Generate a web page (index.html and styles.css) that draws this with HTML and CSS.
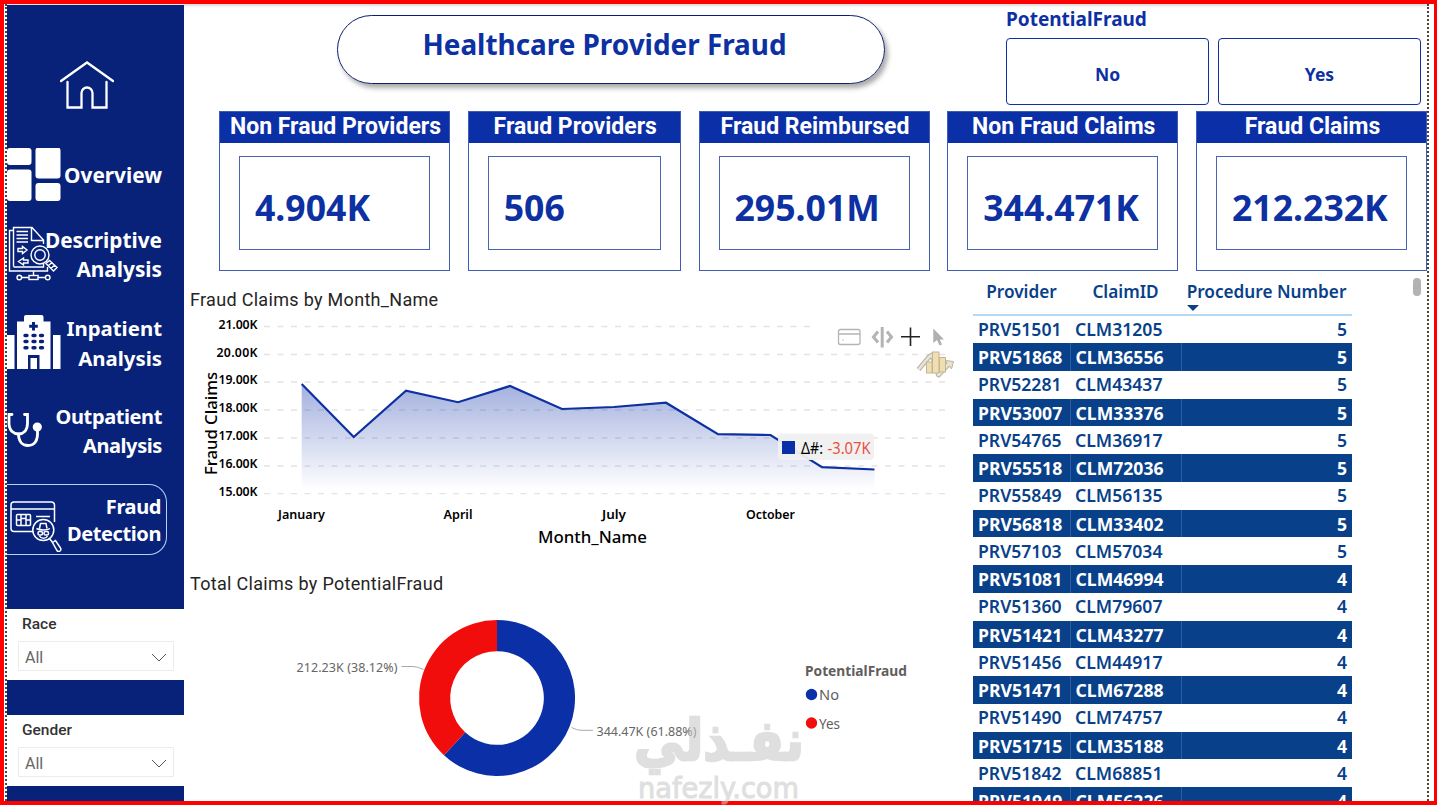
FILE: index.html
```html
<!DOCTYPE html>
<html lang="en">
<head>
    <meta charset="UTF-8">
    <meta name="viewport" content="width=device-width, initial-scale=1.0">
    <title>Healthcare Provider Fraud</title>
    <link rel="stylesheet" href="styles.css">
</head>
<body>
    <div class="report">
        <div class="page">
            <aside class="sidebar">
                <svg class="home" viewBox="0 0 54 48" width="54" height="48">
                    <path d="M1 20 L27 1.500 L53 20 M7.500 21 V46.500 H21.500 V32 a5.500 5.500 0 0 1 11 0 V46.500 H46.500 V21"/>
                </svg>
                <nav>
                    <a class="nav-item overview">
                        <svg viewBox="7 148 54 54" width="54" height="54" fill="#fff">
                            <rect x="7" y="148" width="24.500" height="17" rx="3"/>
                            <rect x="7" y="169.500" width="24.500" height="31.500" rx="3"/>
                            <rect x="35.500" y="147.500" width="25" height="31" rx="3"/>
                            <rect x="35.500" y="183" width="25" height="18" rx="3"/>
                        </svg>
                        <span>Overview</span>
                    </a>
                    <a class="nav-item descriptive">
                        <svg viewBox="7 225 54 58" width="54" height="58" fill="none" stroke="#fff" stroke-width="1.400">
                            <path d="M13.500 265.500 V226.500 H32 L43.500 239 V243 M43.500 262 V266 H13.500 M31.500 227 V239.500 H43.500"/>
                            <path d="M13 229.500 H9.500 V270 H47.500 V266"/>
                            <path d="M16.500 230.500 H28 M16.500 234 H28 M16.500 237.500 H28 M16.500 241 H28"/>
                            <path d="M18 247.500 H22.500 V245.500 L27 249 L22.500 252.500 V250.500 H18 Z M28 259 H23.500 V257 L18.500 260.500 L23.500 264 V262 H28 Z"/>
                            <path d="M33.500 270 V274.500 M21.500 276.500 H29 M38 276.500 H45"/>
                            <rect x="29" y="274.500" width="9" height="4"/>
                            <circle cx="19.300" cy="276.500" r="2.300"/>
                            <circle cx="47.700" cy="276.500" r="2.300"/>
                            <circle cx="40" cy="254" r="9" fill="#08227a"/>
                            <circle cx="40" cy="254" r="5.200"/>
                            <path d="M46 262.500 L49.500 259.500 L57 266.500 L53.500 270 Z M48.500 264.500 L52 261.500 M51 267.500 L54.500 264"/>
                        </svg>
                        <span>Descriptive<br>Analysis</span>
                    </a>
                    <a class="nav-item inpatient">
                        <svg viewBox="7 315 54 58" width="54" height="58">
                            <g fill="#fff">
                                <rect x="7" y="335" width="7.500" height="34"/>
                                <rect x="53" y="335" width="7.500" height="34"/>
                                <path d="M17 369 V321.500 H24 V317 a2 2 0 0 1 2 -2 H41.500 a2 2 0 0 1 2 2 V321.500 H50.500 V369 H39.500 V355 H28 V369 Z"/>
                                <rect x="30.500" y="358" width="6.500" height="11"/>
                            </g>
                            <path d="M33.500 322 V330.500 M29.200 326.200 H37.800" stroke="#08227a" stroke-width="3"/>
                            <path d="M25 335.500 H27 M33 335.500 H35 M40.500 335.500 H42.500 M25 341.500 H27 M33 341.500 H35 M40.500 341.500 H42.500 M25 347.800 H27 M33 347.800 H35 M40.500 347.800 H42.500" stroke="#08227a" stroke-width="3.400" stroke-linecap="round"/>
                        </svg>
                        <span>Inpatient<br>Analysis</span>
                    </a>
                    <a class="nav-item outpatient">
                        <svg viewBox="7 403 40 58" width="40" height="58" fill="none" stroke="#fff" stroke-width="2.800" stroke-linecap="round">
                            <path d="M12 414.500 H9 V423 C9 431 14 434 18.500 434 C23 434 27.500 431 27.500 423 V414.500 H24.500"/>
                            <path d="M18.500 434 C18.500 441 22 445.500 28 445.500 C34.500 445.500 38 441 37.500 431"/>
                            <circle cx="37.300" cy="427" r="3.200" fill="#fff"/>
                        </svg>
                        <span>Outpatient<br>Analysis</span>
                    </a>
                    <a class="nav-item fraud active">
                        <svg viewBox="7 489 56 64" width="56" height="64" fill="none" stroke="#fff" stroke-width="1.500">
                            <path d="M33 532.500 H14 a3 3 0 0 1 -3 -3 V506 a3 3 0 0 1 3 -3 H51.500 a3 3 0 0 1 3 3 V523 M11 510 H54.500 M36 517.500 H50"/>
                            <rect x="16.500" y="515.500" width="14" height="11" rx="1"/>
                            <path d="M17 521 H21 M26 521 H30 M21 516 V526 M26 516 V526 M21 519.500 H26"/>
                            <circle cx="43.300" cy="531" r="10.500" fill="#08227a"/>
                            <path d="M36.500 529.500 C40 531.500 47 531.500 50 529.500 M39.500 529.500 L40.500 524.500 H46 L47 529.500"/>
                            <rect x="38" y="532.500" width="4.500" height="3.500" rx="1.500"/>
                            <rect x="44" y="532.500" width="4.500" height="3.500" rx="1.500"/>
                            <path d="M39.500 537 C41 540 46 540 47.500 537"/>
                            <path d="M49.500 539.500 L53 544 M52.500 543.500 L55.500 541.500 L60.500 549 a2 2 0 0 1 -3.500 2.500 Z"/>
                        </svg>
                        <span>Fraud<br>Detection</span>
                    </a>
                </nav>
                <div class="slicer race">
                    <label>Race</label>
                    <div class="dropdown">All
                        <svg viewBox="0 0 16 10" width="16" height="10"><path d="M1 1 L8 8 L15 1"/></svg>
                    </div>
                </div>
                <div class="slicer">
                    <label>Gender</label>
                    <div class="dropdown">All
                        <svg viewBox="0 0 16 10" width="16" height="10"><path d="M1 1 L8 8 L15 1"/></svg>
                    </div>
                </div>
            </aside>

            <main>
                <header class="top">
                    <h1>Healthcare Provider Fraud</h1>
                    <div class="fraud-filter">
                        <h2>PotentialFraud</h2>
                        <div class="tiles">
                            <button>No</button>
                            <button>Yes</button>
                        </div>
                    </div>
                </header>

                <section class="cards">
                    <div class="card"><h3>Non Fraud Providers</h3><div class="value">4.904K</div></div>
                    <div class="card"><h3>Fraud Providers</h3><div class="value">506</div></div>
                    <div class="card"><h3>Fraud Reimbursed</h3><div class="value">295.01M</div></div>
                    <div class="card"><h3>Non Fraud Claims</h3><div class="value">344.471K</div></div>
                    <div class="card"><h3>Fraud Claims</h3><div class="value">212.232K</div></div>
                </section>

                <section class="visuals">
                    <div class="charts">
                        <div class="chart line-chart">
                            <h4>Fraud Claims by Month_Name</h4>
                            <svg viewBox="184 315 781 245" width="781" height="245">
                                <defs>
                                    <linearGradient id="area" x1="0" y1="384" x2="0" y2="490" gradientUnits="userSpaceOnUse">
                                        <stop offset="0" stop-color="#0d30a8" stop-opacity=".38"/>
                                        <stop offset="1" stop-color="#0d30a8" stop-opacity="0"/>
                                    </linearGradient>
                                </defs>
                                <path class="grid" d="M264 326.500 H815 M264 354.500 H949 M264 382 H949 M264 410 H949 M264 438 H949 M264 466 H949 M264 493.700 H949"/>
                                <path fill="url(#area)" d="M301.700 384 L353.700 437 L406 390.700 L458 402.200 L510 386 L562 409 L614 407 L666 402.700 L718 434.200 L770.500 435 L822 467.200 L874.500 469.500 V492 H301.700 Z"/>
                                <path class="line" d="M301.700 384 L353.700 437 L406 390.700 L458 402.200 L510 386 L562 409 L614 407 L666 402.700 L718 434.200 L770.500 435 L822 467.200 L874.500 469.500"/>
                                <g class="tick">
                                    <text x="218.500" y="329" textLength="39">21.00K</text>
                                    <text x="216.500" y="357" textLength="41">20.00K</text>
                                    <text x="218.500" y="384" textLength="39">19.00K</text>
                                    <text x="218.500" y="412" textLength="39">18.00K</text>
                                    <text x="218.500" y="440" textLength="39">17.00K</text>
                                    <text x="218.500" y="468" textLength="39">16.00K</text>
                                    <text x="218.500" y="496" textLength="39">15.00K</text>
                                    <text x="278" y="519" textLength="47" lengthAdjust="spacingAndGlyphs">January</text>
                                    <text x="443.500" y="519" textLength="29" lengthAdjust="spacingAndGlyphs">April</text>
                                    <text x="602" y="519" textLength="24" lengthAdjust="spacingAndGlyphs">July</text>
                                    <text x="746" y="519" textLength="49" lengthAdjust="spacingAndGlyphs">October</text>
                                </g>
                                <text class="axis" x="538" y="542.500" textLength="109" lengthAdjust="spacingAndGlyphs">Month_Name</text>
                                <text class="axis" transform="translate(216.500 475) rotate(-90)" textLength="103" lengthAdjust="spacingAndGlyphs">Fraud Claims</text>
                                <!-- hover tools -->
                                <g fill="none" stroke="#b4b4b4" stroke-width="1.300">
                                    <rect x="838.500" y="329.500" width="21.500" height="15" rx="2"/>
                                    <path d="M839 334 H860 M842.500 340 h1"/>
                                    <path d="M882.200 327 V347.500" stroke-width="3"/>
                                    <path d="M878 331.500 L873.500 337 L878 342.500 M887 331.500 L891.500 337 L887 342.500" stroke-width="3"/>
                                    <path d="M910.500 327.500 V346 M901 336.800 H920" stroke="#222" stroke-width="1.600"/>
                                </g>
                                <path d="M933.300 328.500 V343 L937 340 L939.500 345.500 L942 344.500 L939.800 339.500 H944 Z" fill="#b0b0b0"/>
                                <g fill="none" stroke-linejoin="round">
                                    <path d="M918.500 369.500 L929 357 L932 355 L938.500 375 L950 362.500" stroke="#b9b5ac" stroke-width="5"/>
                                    <path d="M945 360.500 L953.500 361.500 L951.500 369 Z" fill="#e9e0c6" stroke="#b9b5ac"/>
                                    <path d="M918.500 369.500 L929 357 L932 355 L938.500 375 L950 362.500" stroke="#ece5d2" stroke-width="2.600"/>
                                </g>
                                <g fill="#f0deb0" stroke="#c0b694">
                                    <rect x="926.500" y="362" width="5.500" height="11"/>
                                    <rect x="932.500" y="352" width="6.500" height="21"/>
                                    <rect x="939.500" y="357.500" width="6" height="14.500"/>
                                </g>
                                <g class="tip">
                                    <rect x="778" y="433.500" width="96" height="26.500" rx="4" fill="#f0f0f0" fill-opacity=".95"/>
                                    <rect x="782" y="441" width="13" height="13" fill="#0b2fa6"/>
                                    <text x="801" y="454" textLength="22" lengthAdjust="spacingAndGlyphs">Δ#:</text>
                                    <text x="827.500" y="454" textLength="43" lengthAdjust="spacingAndGlyphs" class="neg">-3.07K</text>
                                </g>
                            </svg>
                        </div>
                        <div class="chart donut-chart">
                            <h4>Total Claims by PotentialFraud</h4>
                            <svg viewBox="184 600 781 201" width="781" height="201">
                                <path fill="#0b2fa6" d="M497 620 A78 78 0 1 1 444 755.200 L465.200 732.300 A46.800 46.800 0 1 0 497 651.200 Z"/>
                                <path fill="#f20d0d" d="M444 755.200 A78 78 0 0 1 497 620 V651.200 A46.800 46.800 0 0 0 465.200 732.300 Z"/>
                                <path class="leader" d="M401.500 666.500 H413 Q417 666.500 423.500 669.500 M571.500 727.500 Q577 730.300 581 730.300 H593"/>
                                <text class="label" x="296.500" y="672" textLength="101">212.23K (38.12%)</text>
                                <text class="label" x="596.500" y="736" textLength="100">344.47K (61.88%)</text>
                                <text class="legend-title" x="805" y="676" textLength="102" lengthAdjust="spacingAndGlyphs">PotentialFraud</text>
                                <circle cx="811.500" cy="694.500" r="5.700" fill="#0b2fa6"/>
                                <circle cx="811.500" cy="723" r="5.700" fill="#f20d0d"/>
                                <text class="legend" x="819" y="700" textLength="20" lengthAdjust="spacingAndGlyphs">No</text>
                                <text class="legend" x="819" y="729" textLength="21" lengthAdjust="spacingAndGlyphs">Yes</text>
                            </svg>
                        </div>
                    </div>

                    <table class="claims">
                        <thead>
                            <tr><th>Provider</th><th>ClaimID</th><th class="sorted">Procedure Number</th></tr>
                        </thead>
                        <tbody>
                            <tr><td>PRV51501</td><td>CLM31205</td><td>5</td></tr>
                            <tr><td>PRV51868</td><td>CLM36556</td><td>5</td></tr>
                            <tr><td>PRV52281</td><td>CLM43437</td><td>5</td></tr>
                            <tr><td>PRV53007</td><td>CLM33376</td><td>5</td></tr>
                            <tr><td>PRV54765</td><td>CLM36917</td><td>5</td></tr>
                            <tr><td>PRV55518</td><td>CLM72036</td><td>5</td></tr>
                            <tr><td>PRV55849</td><td>CLM56135</td><td>5</td></tr>
                            <tr><td>PRV56818</td><td>CLM33402</td><td>5</td></tr>
                            <tr><td>PRV57103</td><td>CLM57034</td><td>5</td></tr>
                            <tr><td>PRV51081</td><td>CLM46994</td><td>4</td></tr>
                            <tr><td>PRV51360</td><td>CLM79607</td><td>4</td></tr>
                            <tr><td>PRV51421</td><td>CLM43277</td><td>4</td></tr>
                            <tr><td>PRV51456</td><td>CLM44917</td><td>4</td></tr>
                            <tr><td>PRV51471</td><td>CLM67288</td><td>4</td></tr>
                            <tr><td>PRV51490</td><td>CLM74757</td><td>4</td></tr>
                            <tr><td>PRV51715</td><td>CLM35188</td><td>4</td></tr>
                            <tr><td>PRV51842</td><td>CLM68851</td><td>4</td></tr>
                            <tr><td>PRV51949</td><td>CLM56226</td><td>4</td></tr>
                        </tbody>
                    </table>
                    <div class="scrollbar"></div>
                </section>
            </main>
        </div>
    </div>
    <svg class="watermark" viewBox="625 705 190 100" width="190" height="100">
        <text class="ar" x="634" y="760" textLength="170" lengthAdjust="spacingAndGlyphs">نفـذلي</text>
        <text class="en" x="638" y="798" textLength="161" lengthAdjust="spacingAndGlyphs">nafezly.com</text>
    </svg>
</body>
</html>
```
FILE: styles.css
```css
* {
    box-sizing: border-box;
}
body {
    margin: 0;
    background-color: white;
    font-family: "Noto Sans", "Open Sans", sans-serif;
}
h1, h2, h3, h4 {
    margin: 0;
}
.report {
    width: 1437px;
    height: 805px;
    border: 4px solid #ff0000;
    border-right-width: 3px;
    padding: 0 5px 0 1px;
    overflow: hidden;
}
.page {
    display: flex;
    height: 797px;
    border-left: 2px dotted #444;
    border-right: 2px dotted #444;
    box-shadow: inset 0 4px 3px -2px #ddd;
}

/* sidebar */
.sidebar {
    width: 177px;
    height: 796px;
    margin-top: 1px;
    flex-shrink: 0;
    background-color: #08227a;
    overflow: hidden;
}
.home {
    display: block;
    margin: 56px 0 39px 53px;
    fill: none;
    stroke: white;
    stroke-width: 2.3;
    stroke-linecap: round;
}
.nav-item {
    display: flex;
    justify-content: space-between;
    align-items: center;
    width: 155px;
    color: white;
    font-size: 20.8px;
    font-weight: bold;
    text-align: right;
    white-space: nowrap;
}
.nav-item svg {
    flex-shrink: 0;
}
.overview {
    height: 54px;
}
.descriptive {
    height: 58px;
    margin-top: 24px;
    line-height: 29px;
}
.descriptive svg {
    margin-right: -20px;
}
.inpatient {
    height: 59px;
    margin-top: 30px;
    font-size: 20.4px;
    line-height: 29.5px;
}
.outpatient {
    height: 57px;
    margin-top: 30px;
    font-size: 20px;
    letter-spacing: -0.4px;
    line-height: 28.5px;
}
.fraud {
    width: 160px;
    height: 71px;
    margin-top: 24px;
    padding-right: 5px;
    font-size: 20px;
    letter-spacing: -0.4px;
    line-height: 27px;
}
.active {
    border: 1px solid #b9d3f3;
    border-left: none;
    border-radius: 0 18px 18px 0;
}
.slicer {
    height: 71px;
    margin-top: 35px;
    padding: 5px 10px 0 11px;
    background-color: white;
    font-family: Roboto, sans-serif;
}
.race {
    margin-top: 54px;
}
.slicer label {
    display: block;
    padding-left: 4px;
    font-size: 15.5px;
    font-weight: 500;
    line-height: 20px;
    color: #333;
}
.dropdown {
    display: flex;
    justify-content: space-between;
    align-items: center;
    height: 30px;
    margin-top: 7px;
    padding: 3px 6px 0;
    border: 1px solid #ececec;
    font-size: 16px;
    color: #666;
}
.dropdown svg {
    fill: none;
    stroke: #555;
}

/* header */
main {
    width: 1243px;
}
.top {
    display: flex;
    height: 107px;
    padding: 11px 6px 0 153px;
    justify-content: space-between;
}
h1 {
    width: 548px;
    height: 69px;
    padding-right: 13px;
    border: 1px solid #0a1f70;
    border-radius: 35px;
    box-shadow: 3px 4px 5px #aaa;
    font-size: 27.9px;
    line-height: 57px;
    text-align: center;
    color: #0d30a2;
}
.fraud-filter {
    width: 415px;
    margin-top: -7px;
}
h2 {
    font-size: 19px;
    line-height: 22px;
    color: #0d30a2;
}
.tiles {
    display: flex;
    gap: 9px;
    margin-top: 8px;
}
.tiles button {
    flex: 1;
    height: 67px;
    padding: 4px 0 0;
    border: 1px solid #0d30a2;
    border-radius: 4px;
    background-color: white;
    font-family: inherit;
    font-size: 17.5px;
    font-weight: bold;
    color: #0d30a2;
}

/* cards */
.cards {
    display: grid;
    grid-template-columns: 231px 213px 231px 231px 231px;
    column-gap: 17.75px;
    height: 160px;
    padding-left: 35px;
}
.card {
    display: flex;
    flex-direction: column;
    border: 1px solid #3f5cb4;
    padding-bottom: 20px;
}
.card h3 {
    height: 31px;
    padding-left: 2px;
    background-color: #0b2fa6;
    color: white;
    font-family: Roboto, sans-serif;
    font-size: 23px;
    line-height: 29px;
    text-align: center;
    white-space: nowrap;
}
.value {
    flex: 1;
    margin: 13px 19px 0;
    padding: 9px 0 0 15px;
    border: 1px solid #4a64b5;
    font-size: 35.6px;
    font-weight: bold;
    line-height: 83px;
    color: #0d30a2;
}

/* charts */
.visuals {
    display: flex;
    height: 530px;
    overflow: hidden;
}
.charts {
    width: 789px;
}
.chart svg {
    display: block;
}
.chart h4 {
    padding-left: 6px;
    font-family: Roboto, sans-serif;
    font-size: 18px;
    font-weight: normal;
    letter-spacing: 0.31px;
    color: #252423;
}
.line-chart h4 {
    height: 44px;
    line-height: 57px;
}
.donut-chart h4 {
    height: 40px;
    line-height: 47px;
}
.grid {
    stroke: #e3e3e8;
    stroke-width: 1.3;
    stroke-dasharray: 6 7.5;
}
.line {
    fill: none;
    stroke: #0d30a2;
    stroke-width: 2.2;
}
.tick {
    font-size: 12.3px;
    font-weight: 600;
}
.axis {
    font-size: 17px;
    font-weight: 500;
}
.tip {
    font-size: 15.5px;
}
.neg {
    fill: #ea4f40;
}
.leader {
    fill: none;
    stroke: #aaa;
}
.label {
    font-size: 12.5px;
    fill: #666;
}
.legend-title {
    font-size: 14.5px;
    font-weight: bold;
    fill: #605e5c;
}
.legend {
    font-size: 15px;
    fill: #605e5c;
}

/* table */
.claims {
    width: 379px;
    height: 540px;
    table-layout: fixed;
    border-collapse: collapse;
    font-size: 17.6px;
    font-weight: 600;
    color: #08418a;
}
.claims tr {
    height: 27.75px;
}
.claims thead tr {
    height: 44px;
    border-bottom: 2px solid #b4daf8;
}
.claims th {
    width: 97px;
    padding: 0 0 2px;
    font-size: 17.2px;
    font-weight: 600;
    white-space: nowrap;
}
.claims th:nth-child(2) {
    width: 111px;
}
.claims th.sorted {
    width: 171px;
    position: relative;
}
.sorted::after {
    content: "";
    position: absolute;
    left: 6px;
    top: 34px;
    border: 6px solid transparent;
    border-top-color: #08418a;
    border-bottom: none;
}
.claims td {
    padding: 0 5px 1px;
    line-height: 26px;
}
.claims td:last-child {
    text-align: right;
}
.claims tbody tr:nth-child(even) {
    background-color: #08418a;
    color: white;
    font-weight: bold;
}
.claims tbody tr:nth-child(even) td {
    padding: 1px 5px 0;
}
.claims tbody tr:nth-child(even) td + td {
    border-left: 1px solid #2c5f9f;
}
.scrollbar {
    width: 8px;
    height: 18px;
    margin: 7px 0 0 61px;
    border-radius: 4px;
    background-color: #b3b3b3;
}

.watermark {
    position: absolute;
    left: 625px;
    top: 705px;
    fill: #c9c9c9;
    opacity: 0.58;
    font-weight: bold;
}
.ar {
    font-family: "DejaVu Sans", sans-serif;
    font-size: 56px;
    stroke: #c9c9c9;
    stroke-width: 2.5;
}
.en {
    font-family: "DejaVu Sans", sans-serif;
    font-size: 28px;
    font-weight: normal;
    stroke: #c9c9c9;
    stroke-width: 1;
}
```
